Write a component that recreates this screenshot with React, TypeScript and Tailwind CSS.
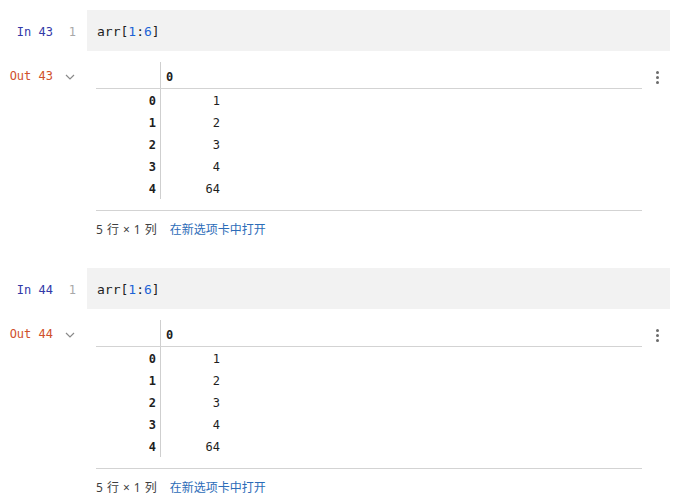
import React from 'react';

const mono = { fontFamily: '"DejaVu Sans Mono", "Liberation Mono", monospace' };

const rows = [
  { idx: '0', val: '1' },
  { idx: '1', val: '2' },
  { idx: '2', val: '3' },
  { idx: '3', val: '4' },
  { idx: '4', val: '64' },
];

const Cell: React.FC<{ n: number }> = ({ n }) => (
  <div className="flex flex-col">
    {/* Input */}
    <div className="flex h-[41px] items-center">
      <div className="flex w-[87px] shrink-0 items-center pt-[2px] text-[12px]" style={mono}>
        <span className="w-[53px] text-right text-[#3339a8]">In {n}</span>
        <span className="w-[23px] text-right text-[#a8a8a8]">1</span>
      </div>
      <div className="flex h-full w-[583px] items-center bg-[#f2f2f2] pl-[10px] pt-[2px] text-[13px] text-[#1e1e1e]" style={mono}>
        arr[<span className="text-[#1c63d6]">1</span>:<span className="text-[#1c63d6]">6</span>]
      </div>
    </div>

    {/* Output */}
    <div className="flex pt-[11px]">
      <div className="flex h-[27px] w-[96px] shrink-0 items-center text-[12px]" style={mono}>
        <span className="w-[53px] pt-[1px] text-right text-[#d0502c]">Out {n}</span>
        <svg className="ml-[12px] mt-[3px]" width="10" height="6" viewBox="0 0 10 6" fill="none">
          <path d="M1 1l4 4 4-4" stroke="#8a8a8a" strokeWidth="1.2" />
        </svg>
      </div>
      <div className="flex w-[546px] flex-col">
        <div className="flex h-[27px] border-b border-[#d3d3d3] text-[12px] font-bold text-[#1e1e1e]" style={mono}>
          <div className="w-[65px] border-r border-[#cfcfcf]" />
          <div className="flex items-center pl-[5px] pt-[3px]">0</div>
        </div>
        <div className="flex flex-col text-[12px] text-[#1e1e1e]" style={mono}>
          {rows.map((r) => (
            <div key={r.idx} className="flex h-[22px] items-center">
              <div className="flex h-full w-[65px] items-center justify-end border-r border-[#cfcfcf] pr-[4px] pt-[2px] font-bold">
                {r.idx}
              </div>
              <div className="w-[59px] pt-[2px] text-right">{r.val}</div>
            </div>
          ))}
        </div>
        <div className="mt-[11px] border-t border-[#d3d3d3]" />
        <div className="flex h-[37px] items-center pt-[1px] text-[12px]" style={{ fontFamily: '"Noto Sans", "Noto Sans CJK SC", sans-serif' }}>
          <span className="flex gap-[4px] text-[#3f3f3f]">
            <span>5</span>
            <span>行</span>
            <span>×</span>
            <span>1</span>
            <span>列</span>
          </span>
          <span className="ml-[13px] text-[#2c6cb8]">在新选项卡中打开</span>
        </div>
      </div>
      <div className="ml-[14px] flex h-[27px] flex-col items-center justify-center gap-[2px] pt-[4px]">
        <span className="h-[3px] w-[3px] rounded-full bg-[#6b6b6b]" />
        <span className="h-[3px] w-[3px] rounded-full bg-[#6b6b6b]" />
        <span className="h-[3px] w-[3px] rounded-full bg-[#6b6b6b]" />
      </div>
    </div>
  </div>
);

export default function App() {
  return (
    <div className="h-[502px] w-[675px] overflow-hidden bg-white pt-[10px]">
      <div className="flex flex-col gap-[20px]">
        <Cell n={43} />
        <Cell n={44} />
      </div>
    </div>
  );
}
